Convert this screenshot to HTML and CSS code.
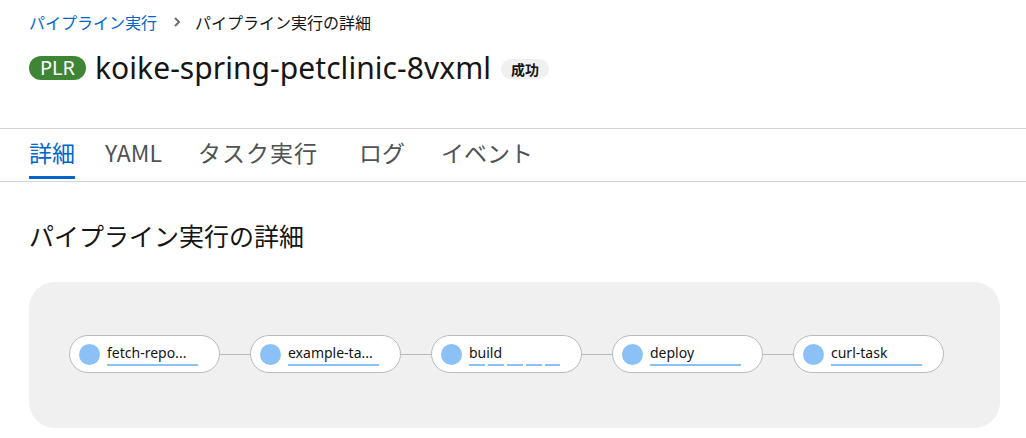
FILE: index.html
```html
<!DOCTYPE html>
<html lang="ja">
<head>
<meta charset="utf-8">
<link rel="stylesheet" href="styles.css">
</head>
<body>
<div class="page-head">
  <nav class="breadcrumb">
    <a class="crumb-link">パイプライン実行</a>
    <span class="crumb-sep"><svg width="8" height="10" viewBox="0 0 8 10"><path d="M2 1 L6 5 L2 9" fill="none" stroke="#6a6e73" stroke-width="2"/></svg></span>
    <span class="crumb-current">パイプライン実行の詳細</span>
  </nav>
  <div class="title-row">
    <span class="plr">PLR</span>
    <h1 class="title">koike-spring-petclinic-8vxml</h1>
    <span class="status">成功</span>
  </div>
</div>
<div class="tabs">
  <span class="tab active t1">詳細</span>
  <span class="tab t2">YAML</span>
  <span class="tab t3">タスク実行</span>
  <span class="tab t4">ログ</span>
  <span class="tab t5">イベント</span>
</div>
<main class="content">
  <h2 class="section-title">パイプライン実行の詳細</h2>
  <div class="graph">
    <div class="node"><span class="dot"></span><span class="label">fetch-repo...<span class="bar"></span></span></div>
    <span class="edge"></span>
    <div class="node"><span class="dot"></span><span class="label">example-ta...<span class="bar"></span></span></div>
    <span class="edge"></span>
    <div class="node"><span class="dot"></span><span class="label">build<span class="bar dashed"></span></span></div>
    <span class="edge"></span>
    <div class="node"><span class="dot"></span><span class="label">deploy<span class="bar"></span></span></div>
    <span class="edge"></span>
    <div class="node"><span class="dot"></span><span class="label">curl-task<span class="bar"></span></span></div>
  </div>
</main>
</body>
</html>
```
FILE: styles.css
```css
* { box-sizing: border-box; }
body {
  margin: 0;
  font-family: "Noto Sans", "Noto Sans CJK JP", sans-serif;
  color: #151515;
  background: #fff;
}
.page-head {
  padding: 12px 26px 0 29px;
  height: 128px;
}
.breadcrumb {
  display: flex;
  align-items: center;
  font-size: 16px;
  line-height: 20px;
  font-family: "Noto Sans CJK JP", sans-serif;
}
.crumb-link { color: #0066cc; }
.crumb-sep { display: flex; margin: 0 14px 0 16px; }
.crumb-current { color: #151515; }
.title-row {
  display: flex;
  align-items: center;
  margin-top: 17px;
}
.plr {
  background: #3e8635;
  color: #fff;
  font-size: 20px;
  line-height: 24px;
  height: 24px;
  padding: 0 11px;
  border-radius: 12px;
  font-family: "Noto Sans", sans-serif;
  margin-right: 9px;
}
.title {
  margin: 0;
  font-size: 30px;
  font-weight: 400;
  line-height: 38px;
  letter-spacing: 0.05px;
}
.status {
  margin-left: 10px;
  background: #f0f0f0;
  border-radius: 10px;
  font-size: 14px;
  font-weight: 700;
  line-height: 20px;
  padding: 0 10px;
  font-family: "Noto Sans CJK JP", sans-serif;
  margin-top: 2px;
}
.tabs {
  display: flex;
  height: 54px;
  border-top: 1px solid #d2d2d2;
  border-bottom: 1px solid #d2d2d2;
  padding-left: 29px;
}
.tab {
  position: relative;
  font-size: 23px;
  line-height: 46px;
  color: #4f5255;
  font-family: "Noto Sans CJK JP", sans-serif;
}
.t1 { margin-right: 30px; }
.t2 { margin-right: 36px; }
.t3 { margin-right: 41px; letter-spacing: 1px; }
.t4 { margin-right: 36px; }
.tab.active { color: #0066cc; }
.tab.active::after {
  content: "";
  position: absolute;
  left: 0; right: 0;
  top: 47px;
  height: 3px;
  background: #0066cc;
}
.content {
  padding: 0 26px 0 29px;
}
.section-title {
  margin: 0;
  padding-top: 35px;
  font-size: 25px;
  font-weight: 400;
  line-height: 36px;
  font-family: "Noto Sans CJK JP", sans-serif;
}
.graph {
  margin-top: 29px;
  height: 146px;
  background: #f0f0f0;
  border-radius: 26px;
  display: flex;
  align-items: center;
  padding-left: 40px;
  padding-bottom: 2px;
}
.node {
  width: 151px;
  height: 38px;
  background: #fff;
  border: 1px solid #b8bbbe;
  border-radius: 19px;
  display: flex;
  align-items: center;
  padding-left: 9px;
  flex: none;
}
.dot {
  width: 21px;
  height: 21px;
  border-radius: 50%;
  background: #8bc1f7;
  margin-right: 7px;
  flex: none;
}
.label {
  position: relative;
  font-size: 14px;
  line-height: 20px;
  color: #151515;
  width: 91px;
  white-space: nowrap;
  font-family: "Noto Sans", sans-serif;
  top: -1px;
}
.bar {
  position: absolute;
  left: 0;
  width: 91px;
  bottom: -3px;
  height: 2px;
  background: #8bc1f7;
}
.bar.dashed {
  background: repeating-linear-gradient(to right, #8bc1f7 0 16px, transparent 16px 19px);
}
.edge {
  width: 30px;
  height: 1px;
  background: #b8bbbe;
  flex: none;
}
```
